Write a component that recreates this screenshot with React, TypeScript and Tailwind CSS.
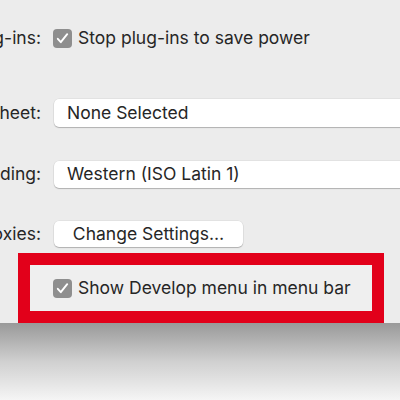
import React from "react";

function Check() {
  return (
    <span className="flex h-[19px] w-[19px] shrink-0 items-center justify-center rounded-[4px] bg-[#8e8e8e]">
      <svg viewBox="0 0 19 19" className="h-[19px] w-[19px]" fill="none">
        <path
          d="M4.8 9.8l3 3.4 6.4-8"
          stroke="#ffffff"
          strokeWidth={1.9}
          strokeLinecap="round"
          strokeLinejoin="round"
        />
      </svg>
    </span>
  );
}

function Label({ children }: { children: React.ReactNode }) {
  return (
    <div className="flex w-[41px] shrink-0 justify-end whitespace-nowrap">
      {children}
    </div>
  );
}

export default function App() {
  return (
    <div className="relative h-[400px] w-[400px] overflow-hidden bg-[#ececec] font-['Inter',sans-serif] text-[17.5px] text-[#262626]">
      <div className="flex h-[323px] flex-col">
        {/* plug-ins */}
        <div className="mt-[28px] flex h-[21px] items-center gap-[12px]">
          <Label>Internet plug-ins:</Label>
          <div className="flex items-center gap-[6px] whitespace-nowrap">
            <Check />
            <span>Stop plug-ins to save power</span>
          </div>
        </div>

        {/* style sheet */}
        <div className="mt-[50px] flex h-[28px] items-center gap-[13px]">
          <Label>Style sheet:</Label>
          <div className="flex h-[28px] w-[400px] shrink-0 items-center rounded-[5px] bg-white pl-[13px] shadow-[0_1px_1px_rgba(0,0,0,0.22),0_0_0_0.5px_rgba(0,0,0,0.08)]">
            None Selected
          </div>
        </div>

        {/* encoding */}
        <div className="mt-[34px] flex h-[27px] items-center gap-[13px]">
          <Label>Default encoding:</Label>
          <div className="flex h-[27px] w-[400px] shrink-0 items-center rounded-[5px] bg-white pl-[13px] shadow-[0_1px_1px_rgba(0,0,0,0.22),0_0_0_0.5px_rgba(0,0,0,0.08)]">
            Western (ISO Latin 1)
          </div>
        </div>

        {/* proxies */}
        <div className="mt-[33px] flex h-[26px] items-center gap-[13px]">
          <Label>Proxies:</Label>
          <button className="flex h-[26px] w-[189px] shrink-0 items-center justify-center rounded-[5px] bg-white shadow-[0_1px_1px_rgba(0,0,0,0.22),0_0_0_0.5px_rgba(0,0,0,0.08)]">
            Change Settings…
          </button>
        </div>

        {/* highlighted develop option */}
        <div className="ml-[18px] mt-[6px] h-[70px] w-[366px] border-[12px] border-[#e2001a] bg-[#efefef]">
          <div className="flex h-full items-center gap-[6px] whitespace-nowrap pl-[23px]">
            <Check />
            <span>Show Develop menu in menu bar</span>
          </div>
        </div>
      </div>
      <div className="h-[77px] bg-gradient-to-b from-[#999999] via-[#d0d0d0] to-[#f5f5f5]" />
    </div>
  );
}
